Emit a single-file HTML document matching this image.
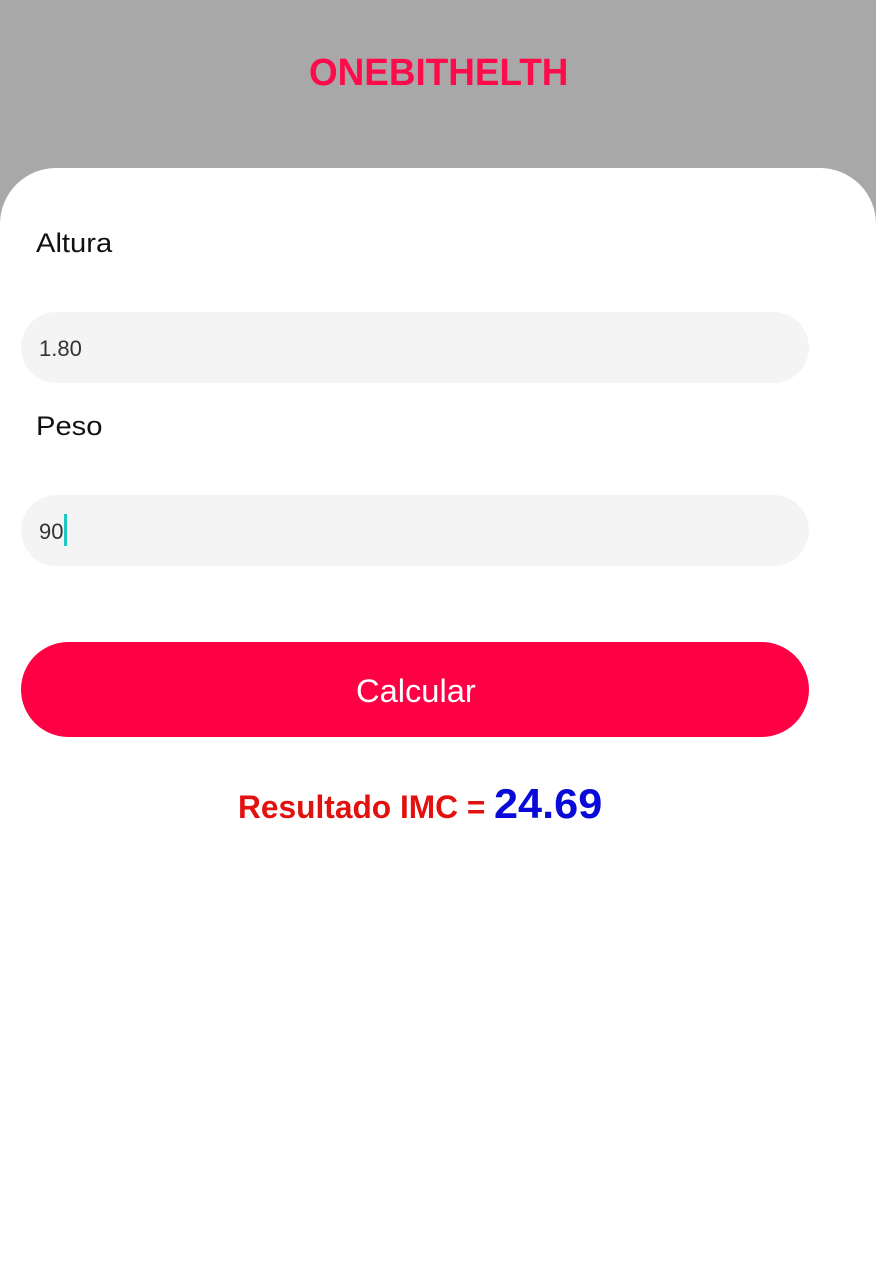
<!DOCTYPE html>
<html><head><meta charset="utf-8"><style>
*{margin:0;padding:0;box-sizing:border-box}
body{width:876px;height:1280px;background:#a8a8a8;font-family:"Liberation Sans",sans-serif;position:relative;overflow:hidden}
.t{position:absolute;white-space:nowrap;transform-origin:left top}
#card{position:absolute;left:0;top:168px;width:876px;height:1112px;background:#fff;border-radius:56px 56px 0 0}
.inp{position:absolute;left:21px;width:788px;height:71px;background:#f4f4f4;border-radius:36px}
</style></head><body>
<div class="t" style="left:309px;top:52px;font-size:38px;font-weight:bold;color:#ff0a4a;transform:scaleX(0.97)">ONEBITHELTH</div>
<div id="card"></div>
<div class="t" style="left:36px;top:228px;font-size:27px;color:#111;transform:scaleX(1.08)">Altura</div>
<div class="inp" style="top:312px"></div>
<div class="t" style="left:39px;top:336px;font-size:22px;color:#333">1.80</div>
<div class="t" style="left:36px;top:411px;font-size:27px;color:#111;transform:scaleX(1.08)">Peso</div>
<div class="inp" style="top:495px"></div>
<div class="t" style="left:39px;top:519px;font-size:22px;color:#333">90</div>
<div style="position:absolute;left:64px;top:514px;width:3px;height:32px;background:#1fc8c0"></div>
<div style="position:absolute;left:21px;top:642px;width:788px;height:95px;background:#ff0044;border-radius:48px"></div>
<div class="t" style="left:356px;top:673px;font-size:32px;color:#fff;transform:scaleX(1.02)">Calcular</div>
<div class="t" style="left:238px;top:789px;font-size:32px;font-weight:bold;color:#e31010;transform:scaleX(0.99)">Resultado IMC =</div>
<div class="t" style="left:494px;top:780px;font-size:42px;font-weight:bold;color:#0a0ad8;transform:scaleX(1.03)">24.69</div>
</body></html>
